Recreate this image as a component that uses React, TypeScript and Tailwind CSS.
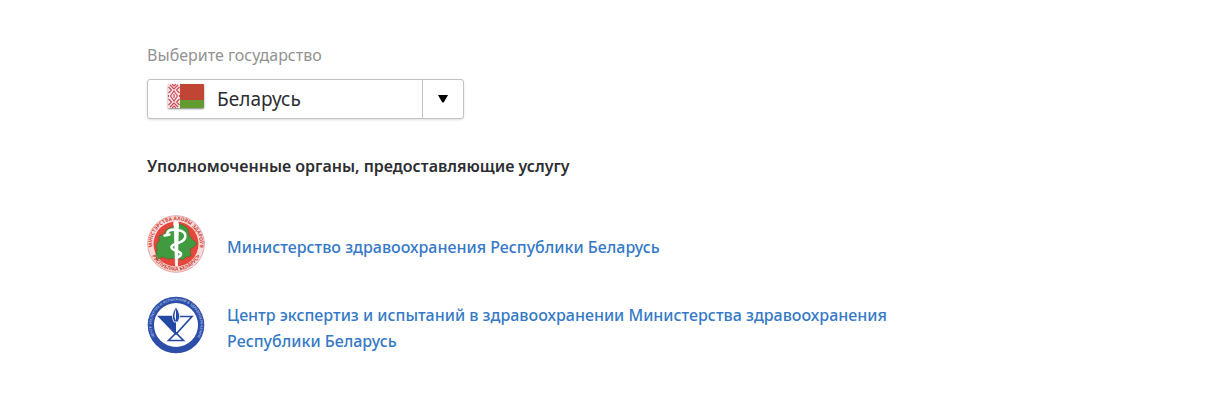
import { useState, type ReactNode } from "react";

const countries = [{ value: "by", name: "Беларусь" }];

const organizations = [
  {
    id: "ministry",
    name: "Министерство здравоохранения Республики Беларусь",
    logo: <MinistryLogo />,
  },
  {
    id: "center",
    name: "Центр экспертиз и испытаний в здравоохранении Министерства здравоохранения Республики Беларусь",
    logo: <CenterLogo />,
  },
];

export default function App() {
  const [country, setCountry] = useState("by");

  return (
    <main className="px-[12%] py-[43px] font-['Noto_Sans',sans-serif] text-base text-[#2d2e33]">
      <div className="max-w-[760px]">
        <label htmlFor="country" className="block text-[#929292]">
          Выберите государство
        </label>
        <CountrySelect value={country} onChange={setCountry} />

        <h2 className="mt-[35px] font-semibold">Уполномоченные органы, предоставляющие услугу</h2>
        <ul className="mt-[37px] flex flex-col gap-[23px]">
          {organizations.map((organization) => (
            <Organization key={organization.id} logo={organization.logo}>
              {organization.name}
            </Organization>
          ))}
        </ul>
      </div>
    </main>
  );
}

function CountrySelect({ value, onChange }: { value: string; onChange: (value: string) => void }) {
  return (
    <div className="relative mt-3 h-10 w-full max-w-[317px] overflow-hidden rounded-[3px] border border-[#bec3c6] bg-white shadow-sm">
      <select
        id="country"
        value={value}
        onChange={(event) => onChange(event.target.value)}
        className="h-full w-full appearance-none bg-transparent pl-[69px] text-[19px] text-[#2d2e33] outline-none"
      >
        {countries.map((item) => (
          <option key={item.value} value={item.value}>
            {item.name}
          </option>
        ))}
      </select>
      <BelarusFlag />
      <span className="pointer-events-none absolute inset-y-0 right-0 flex w-[41px] items-center justify-center border-l border-[#bec3c6]">
        <svg viewBox="0 0 10 8" className="h-2 w-2.5" aria-hidden="true">
          <path d="M0 0h10L6 7Q5 8 4 7z" fill="#000" />
        </svg>
      </span>
    </div>
  );
}

function Organization({ logo, children }: { logo: ReactNode; children: ReactNode }) {
  return (
    <li className="flex items-center gap-[22px]">
      {logo}
      <a href="#" className="pt-1.5 leading-[26px] font-medium text-[#3579c6] hover:underline">
        {children}
      </a>
    </li>
  );
}

function BelarusFlag() {
  return (
    <svg
      viewBox="0 0 36 24"
      className="pointer-events-none absolute top-1 left-5 h-6 w-9 rounded-[1px] shadow-[0_1px_2px_rgba(0,0,0,0.5)]"
      aria-hidden="true"
    >
      <path fill="#c04535" d="M0 0h36v16H0z" />
      <path fill="#649b30" d="M12 16h24v8H12z" />
      <path fill="#f5e4e6" d="M0 0h12v24H0z" />
      <g fill="none" stroke="#cb4650" strokeWidth="1.1">
        <path d="M6 7l3.500 5L6 17l-3.500-5zM6 10v4" />
        <path d="M2 1l4 4 4-4M4 0l2 2 2-2M2 23l4-4 4 4M4 24l2-2 2 2" />
        <path d="M.5 3l3 3-3 3M11.500 3l-3 3 3 3M.5 15l3 3-3 3M11.500 15l-3 3 3 3M.5 11v2M11.500 11v2" />
      </g>
    </svg>
  );
}

function MinistryLogo() {
  return (
    <svg viewBox="0 0 58 58" className="size-[58px] shrink-0" aria-hidden="true">
      <defs>
        <path id="ministry-top" d="M5.500 34A24 24 0 1 1 52.500 34" />
        <path id="ministry-bottom" d="M4 38A26.500 26.500 0 0 0 54 38" />
      </defs>
      <circle cx="29" cy="29" r="28.300" fill="#f9dcd9" stroke="#e3a8a2" strokeWidth="1" />
      <circle cx="29" cy="29" r="22.500" fill="#e5473d" />
      <path
        d="M22 13l6-2 5-2 5 2 3 3 1 6 4 5 4 3-3 4-4 2 1 7-5 1-3 3-6-2-9 1-6-2-5 3-1-5 1-6-1-4 3-4 0-5 5-2 2-4z"
        fill="#3f9a40"
        stroke="#6a6030"
        strokeWidth=".8"
      />
      <g fill="none" stroke="#fff" strokeLinecap="round">
        <path
          d="M20 20c0-5 4-6 10-5 11 1 11 10 1 13-8 2-9 6-1 8 6 2 5 5-1 7"
          strokeWidth="2.600"
        />
        <path d="M17.500 20.500l5-1" strokeWidth="2.500" />
      </g>
      <circle cx="29" cy="8.500" r="2.700" fill="#fff" />
      <path d="M27 9h4.500L30.500 51h-2z" fill="#fff" stroke="#fff" strokeWidth=".7" />
      <g fill="#d0433b" fontSize="5" fontWeight="700" textAnchor="middle">
        <text>
          <textPath href="#ministry-top" startOffset="50%">
            МІНІСТЭРСТВА АХОВЫ ЗДАРОЎЯ
          </textPath>
        </text>
        <text>
          <textPath href="#ministry-bottom" startOffset="50%">
            РЭСПУБЛІКА БЕЛАРУСЬ
          </textPath>
        </text>
      </g>
    </svg>
  );
}

function CenterLogo() {
  return (
    <svg viewBox="0 0 58 58" className="size-[58px] shrink-0" aria-hidden="true">
      <defs>
        <path id="center-ring" d="M12 46.500A24.400 24.400 0 1 1 46 46.500" />
      </defs>
      <circle cx="29" cy="29" r="28.300" fill="#2c4ea8" />
      <circle cx="29" cy="29" r="22" fill="#fff" />
      <text fill="#a6b9e3" fontSize="3.500" fontWeight="600" textAnchor="middle">
        <textPath href="#center-ring" startOffset="50%">
          ЦЕНТР ЭКСПЕРТИЗ И ИСПЫТАНИЙ В ЗДРАВООХРАНЕНИИ
        </textPath>
      </text>
      <path d="M12 20.500h17v18z" fill="#2449a5" />
      <path d="M12 20.500h33L29 38zM29 37l-7.500 7.500h15z" fill="none" stroke="#2449a5" strokeWidth="1.600" />
      <path d="M29 11q-6 8-2 15h4q4-7-2-15z" fill="#2449a5" stroke="#fff" strokeWidth=".8" />
      <path d="M29 13v12q-3-5 0-12z" fill="#fff" />
    </svg>
  );
}
